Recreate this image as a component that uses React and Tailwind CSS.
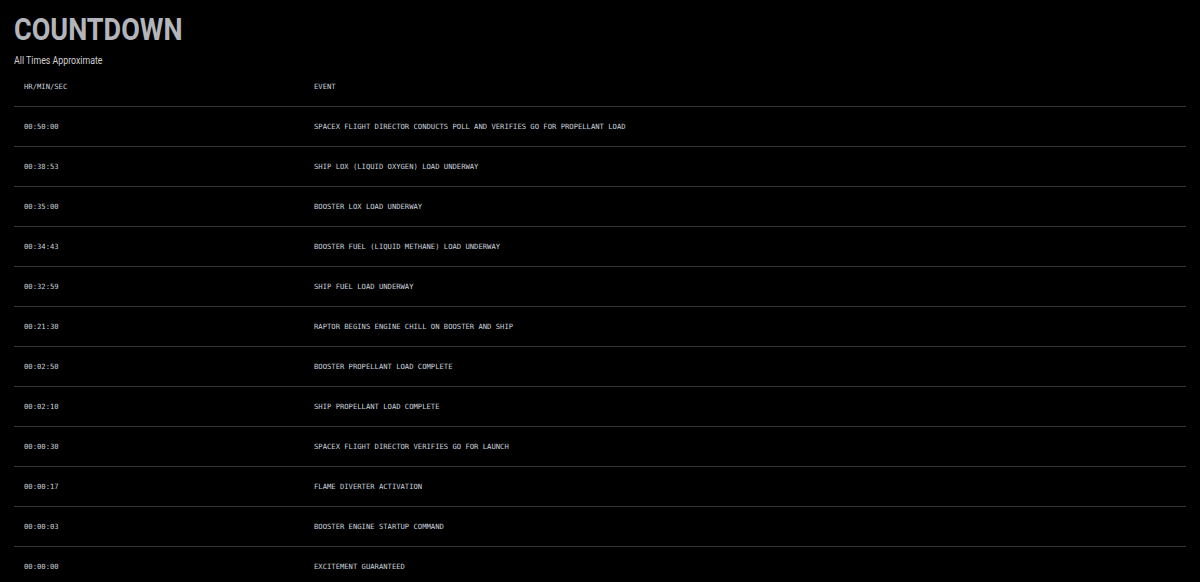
import React from "react";

const rows = [
  ["00:50:00", "SPACEX FLIGHT DIRECTOR CONDUCTS POLL AND VERIFIES GO FOR PROPELLANT LOAD"],
  ["00:38:53", "SHIP LOX (LIQUID OXYGEN) LOAD UNDERWAY"],
  ["00:35:00", "BOOSTER LOX LOAD UNDERWAY"],
  ["00:34:43", "BOOSTER FUEL (LIQUID METHANE) LOAD UNDERWAY"],
  ["00:32:59", "SHIP FUEL LOAD UNDERWAY"],
  ["00:21:30", "RAPTOR BEGINS ENGINE CHILL ON BOOSTER AND SHIP"],
  ["00:02:50", "BOOSTER PROPELLANT LOAD COMPLETE"],
  ["00:02:10", "SHIP PROPELLANT LOAD COMPLETE"],
  ["00:00:30", "SPACEX FLIGHT DIRECTOR VERIFIES GO FOR LAUNCH"],
  ["00:00:17", "FLAME DIVERTER ACTIVATION"],
  ["00:00:03", "BOOSTER ENGINE STARTUP COMMAND"],
  ["00:00:00", "EXCITEMENT GUARANTEED"],
];

const mono = { fontFamily: "'DejaVu Sans Mono', 'Liberation Mono', monospace" };
const sans = { fontFamily: "Roboto, 'Liberation Sans', sans-serif" };

export default function App() {
  return (
    <div className="bg-black min-h-[582px] w-full px-[14px] pt-[10px] overflow-hidden">
      <h1
        className="text-[32px] leading-[38px] font-bold text-[#b3b5bb] origin-left scale-x-[0.845]"
        style={sans}
      >
        COUNTDOWN
      </h1>
      <p
        className="mt-[7px] text-[10px] leading-[12px] text-[#d0d0d0] origin-left scale-x-[0.88]"
        style={sans}
      >
        All Times Approximate
      </p>
      <div className="w-[1172px] text-[7.2px] text-[#c9d1dc]" style={mono}>
        <div className="flex h-[40px] items-center border-b border-[#363636] pt-[1px]">
          <div className="w-[290px] pl-[10px]">HR/MIN/SEC</div>
          <div className="pl-[10px]">EVENT</div>
        </div>
        {rows.map(([t, e]) => (
          <div key={t} className="flex h-[40px] items-center border-b border-[#363636] pt-[1px]">
            <div className="w-[290px] pl-[10px]">{t}</div>
            <div className="pl-[10px]">{e}</div>
          </div>
        ))}
      </div>
    </div>
  );
}
